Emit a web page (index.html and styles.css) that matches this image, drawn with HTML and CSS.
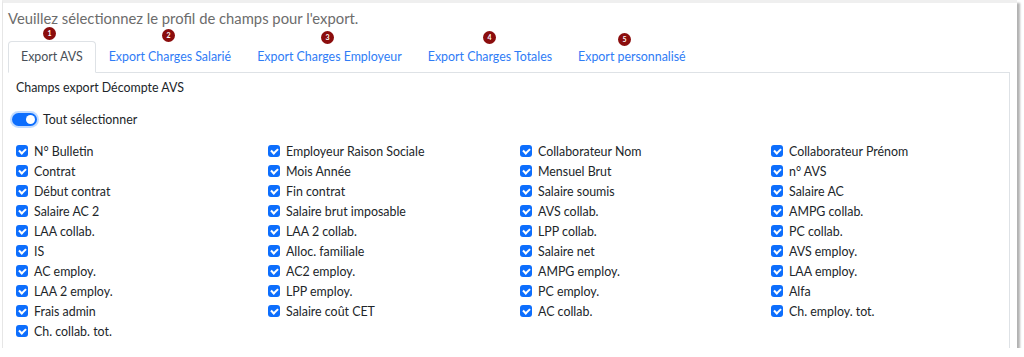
FILE: index.html
```html
<!DOCTYPE html>
<html lang="fr">
<head>
  <meta charset="UTF-8" />
  <meta name="viewport" content="width=device-width, initial-scale=1.0" />
  <title>Export</title>
  <link rel="stylesheet" href="styles.css">
</head>
<body>
  <div class="shot">
    <p class="intro">Veuillez sélectionnez le profil de champs pour l'export.</p>

    <!-- numbered annotations above the tabs -->
    <span class="badge b1">1</span>
    <span class="badge b2">2</span>
    <span class="badge b3">3</span>
    <span class="badge b4">4</span>
    <span class="badge b5">5</span>

    <ul class="tabs">
      <li><a class="tab active">Export AVS</a></li>
      <li><a class="tab">Export Charges Salarié</a></li>
      <li><a class="tab">Export Charges Employeur</a></li>
      <li><a class="tab">Export Charges Totales</a></li>
      <li><a class="tab">Export personnalisé</a></li>
    </ul>

    <div class="tab-content">
      <div class="title">Champs export Décompte AVS</div>
      <div class="switch-row">
        <span class="switch"><span class="knob"></span></span>
        <span>Tout sélectionner</span>
      </div>
      <div class="fields" id="fields"></div>
    </div>
  </div>

  <script>
    const fields = [
      "N° Bulletin", "Employeur Raison Sociale", "Collaborateur Nom", "Collaborateur Prénom",
      "Contrat", "Mois Année", "Mensuel Brut", "n° AVS",
      "Début contrat", "Fin contrat", "Salaire soumis", "Salaire AC",
      "Salaire AC 2", "Salaire brut imposable", "AVS collab.", "AMPG collab.",
      "LAA collab.", "LAA 2 collab.", "LPP collab.", "PC collab.",
      "IS", "Alloc. familiale", "Salaire net", "AVS employ.",
      "AC employ.", "AC2 employ.", "AMPG employ.", "LAA employ.",
      "LAA 2 employ.", "LPP employ.", "PC employ.", "Alfa",
      "Frais admin", "Salaire coût CET", "AC collab.", "Ch. employ. tot.",
      "Ch. collab. tot."
    ];
    const list = document.getElementById('fields');
    fields.forEach(function (name) {
      const row = document.createElement('label');
      row.className = 'field';
      row.innerHTML = '<span class="box"></span><span></span>';
      row.lastChild.textContent = name;
      list.appendChild(row);
    });
  </script>
</body>
</html>
```

FILE: styles.css
```css
body {
  margin: 0;
  background: #fff;
  font-family: Lato, "Noto Sans", Arial, sans-serif;
  color: #212529;
}
.shot {
  position: relative;
  width: 1015px;
  height: 348px;
  margin-left: 2px;
  border-top: 3px solid #efefef;
  border-left: 1px solid #e6e6e6;
  box-shadow: 3px 3px 2px rgba(0, 0, 0, 0.3);
  background: #fff;
  padding: 0 7px 0 5px;
  box-sizing: border-box;
  overflow: hidden;
}
.intro {
  margin: 4px 0 0 0;
  font-size: 14.8px;
  line-height: 22px;
  color: #6c6c6c;
}
.badge {
  position: absolute;
  width: 13px;
  height: 13px;
  border-radius: 50%;
  background: #8b0d0d;
  color: #fff;
  font-size: 7px;
  font-weight: bold;
  line-height: 13px;
  text-align: center;
}
.b1 { left: 40px; top: 24px; }
.b2 { left: 159px; top: 26px; }
.b3 { left: 318px; top: 28px; }
.b4 { left: 480px; top: 28px; }
.b5 { left: 615px; top: 30px; }
.tabs {
  list-style: none;
  display: flex;
  margin: 12px 0 0 0;
  padding: 0;
  border-bottom: 1px solid #dee2e6;
}
.tab {
  display: block;
  padding: 7px 12px;
  line-height: 16px;
  font-size: 12.4px;
  color: #2f7cf6;
  border: 1px solid transparent;
  border-radius: 4px 4px 0 0;
  margin-bottom: -1px;
  cursor: pointer;
}
.tab.active {
  color: #495057;
  background: #fff;
  border-color: #dee2e6 #dee2e6 #fff;
}
.tab-content {
  border-right: 1px solid #dee2e6;
  height: 300px;
  padding: 5px 0 0 8px;
  font-size: 12.4px;
}
.title {
  line-height: 20px;
}
.switch-row {
  display: flex;
  align-items: center;
  gap: 6px;
  height: 20px;
  margin: 11px 0 0 -4px;
}
.switch {
  position: relative;
  width: 25px;
  height: 13px;
  border-radius: 7px;
  background: #0d6efd;
  box-shadow: 0 0 0 2px rgba(13, 110, 253, 0.25);
}
.knob {
  position: absolute;
  right: 2px;
  top: 2px;
  width: 9px;
  height: 9px;
  border-radius: 50%;
  background: #fff;
}
.fields {
  display: grid;
  grid-template-columns: 252px 252px 251px 1fr;
  margin-top: 12px;
}
.field {
  display: flex;
  align-items: center;
  gap: 6px;
  height: 20px;
}
.box {
  position: relative;
  width: 12px;
  height: 12px;
  border-radius: 3px;
  background: #0d6efd;
  flex: none;
}
.box::after {
  content: "";
  position: absolute;
  left: 4px;
  top: 2px;
  width: 3px;
  height: 5px;
  border: solid #fff;
  border-width: 0 2px 2px 0;
  transform: rotate(45deg);
}
```
